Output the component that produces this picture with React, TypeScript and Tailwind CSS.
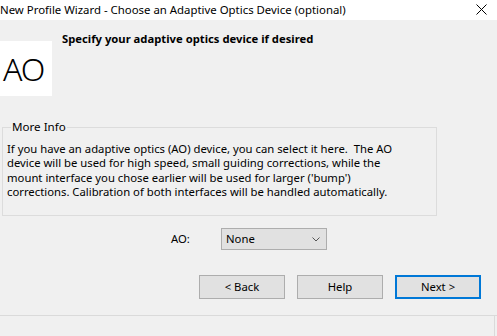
export default function App() {
  return (
    <div
      className="w-[497px] h-[336px] bg-[#f0f0f0] text-black overflow-hidden flex flex-col text-[11.3px]"
      style={{ fontFamily: '"Noto Sans", "Open Sans", sans-serif' }}
    >
      {/* title bar */}
      <div className="h-[20px] bg-white flex items-center justify-between pr-[10px]">
        <span className="leading-none text-[11.4px]">New Profile Wizard - Choose an Adaptive Optics Device (optional)</span>
        <svg width="11" height="11" viewBox="0 0 11 11" className="mt-[-2px]">
          <path d="M0.5 0.5 L10.5 10.5 M10.5 0.5 L0.5 10.5" stroke="#000" strokeWidth="1" />
        </svg>
      </div>

      {/* header */}
      <div className="flex h-[100px]">
        <div className="w-[52px] h-[55px] mt-[21px] bg-white flex items-center pl-[3px]">
          <span className="text-[32px] font-light leading-none tracking-[-1px] mt-[1px]">AO</span>
        </div>
        <div className="ml-[10px] mt-[12px] font-bold leading-[14px] text-[11.25px]">
          Specify your adaptive optics device if desired
        </div>
      </div>

      {/* more info group */}
      <fieldset className="ml-[2px] w-[435px] h-[96px] border border-[#dcdcdc] pl-[4px] pr-[4px]">
        <legend className="ml-[4px] px-[1px] leading-[14px] text-[11.6px]">More Info</legend>
        <p className="mt-[8px] leading-[14.33px]">
          If you have an adaptive optics (AO) device, you can select it here.&nbsp; The AO
          <br />
          device will be used for high speed, small guiding corrections, while the
          <br />
          mount interface you chose earlier will be used for larger ('bump')
          <br />
          corrections. Calibration of both interfaces will be handled automatically.
        </p>
      </fieldset>

      {/* AO select */}
      <div className="flex items-center mt-[12px] h-[22px]">
        <span className="ml-[171px] w-[50px]">AO:</span>
        <div className="w-[106px] h-[22px] bg-[#e1e1e1] border border-[#adadad] flex items-center justify-between pl-[4px] pr-[6px]">
          <span>None</span>
          <svg width="8" height="5" viewBox="0 0 8 5">
            <path d="M0.5 0.5 L4 4 L7.5 0.5" fill="none" stroke="#555" strokeWidth="1" />
          </svg>
        </div>
      </div>

      {/* buttons */}
      <div className="flex justify-end gap-[12px] pr-[16px] mt-[25px]">
        <button className="w-[86px] h-[24px] bg-[#e1e1e1] border border-[#adadad]">&lt; Back</button>
        <button className="w-[86px] h-[24px] bg-[#e1e1e1] border border-[#adadad]">Help</button>
        <button className="w-[86px] h-[24px] bg-[#e1e1e1] border-2 border-[#0078d7]">Next &gt;</button>
      </div>

      <div className="mt-[16px] flex-1 border-t border-[#dadada] flex justify-end">
        <div className="w-[3px] border-l border-[#dadada]" />
      </div>
    </div>
  );
}
